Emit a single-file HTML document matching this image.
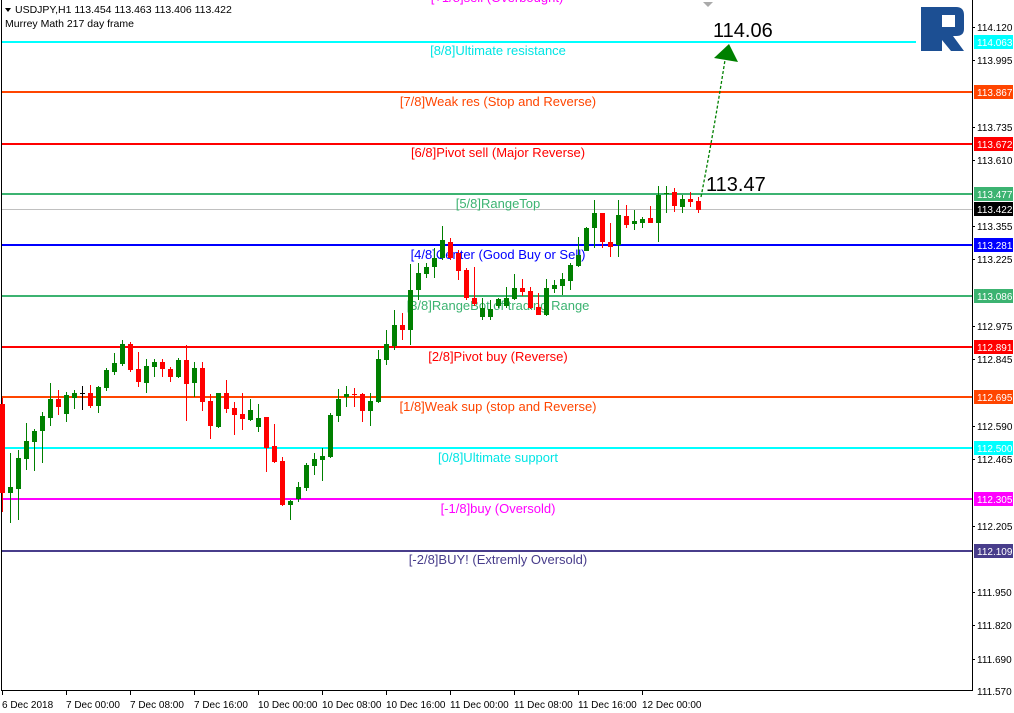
<!DOCTYPE html>
<html><head><meta charset="utf-8"><style>
html,body{margin:0;padding:0;background:#fff;}
svg{display:block;font-family:"Liberation Sans",sans-serif;}
</style></head><body>
<svg width="1014" height="713" viewBox="0 0 1014 713" xmlns="http://www.w3.org/2000/svg">
<rect width="1014" height="713" fill="#fff"/>
<line x1="1.5" y1="0" x2="1.5" y2="690" stroke="#000"/>
<line x1="972.5" y1="0" x2="972.5" y2="691" stroke="#000"/>
<line x1="1" y1="690.5" x2="973" y2="690.5" stroke="#000"/>

<text x="497" y="2" font-size="13" fill="#ff00ff" text-anchor="middle">[+1/8]sell (Overbought)</text>
<polygon points="703,2 713,2 708,7" fill="#aaa"/>

<polygon points="5,8 11,8 8,12" fill="#000"/>
<text x="15" y="13" font-size="10.5" fill="#000">USDJPY,H1  113.454 113.463 113.406 113.422</text>
<text x="5" y="27" font-size="10.5" fill="#000">Murrey Math 217 day frame</text>

<g stroke-width="2" shape-rendering="crispEdges">
<line x1="2" y1="42" x2="916" y2="42" stroke="#00ffff"/>
<line x1="2" y1="92" x2="972" y2="92" stroke="#ff4500"/>
<line x1="2" y1="144" x2="972" y2="144" stroke="#ff0000"/>
<line x1="2" y1="194" x2="972" y2="194" stroke="#3cb371"/>
<line x1="2" y1="245" x2="972" y2="245" stroke="#0000ff"/>
<line x1="2" y1="296" x2="972" y2="296" stroke="#3cb371"/>
<line x1="2" y1="347" x2="972" y2="347" stroke="#ff0000"/>
<line x1="2" y1="397" x2="972" y2="397" stroke="#ff4500"/>
<line x1="2" y1="448" x2="972" y2="448" stroke="#00ffff"/>
<line x1="2" y1="499" x2="972" y2="499" stroke="#ff00ff"/>
<line x1="2" y1="551" x2="972" y2="551" stroke="#483d8b"/>
</g>
<line x1="2" y1="209.5" x2="972" y2="209.5" stroke="#c0c0c0" shape-rendering="crispEdges"/>

<g font-size="13" text-anchor="middle">
<text x="498" y="55" fill="#00e5e5">[8/8]Ultimate resistance</text>
<text x="498" y="106" fill="#ff4500">[7/8]Weak res (Stop and Reverse)</text>
<text x="498" y="157" fill="#ff0000">[6/8]Pivot sell (Major Reverse)</text>
<text x="498" y="208" fill="#3cb371">[5/8]RangeTop</text>
<text x="498" y="259" fill="#0000ff">[4/8]Center (Good Buy or Sell)</text>
<text x="498" y="310" fill="#3cb371">[3/8]RangeBot of trading Range</text>
<text x="498" y="361" fill="#ff0000">[2/8]Pivot buy (Reverse)</text>
<text x="498" y="411" fill="#ff4500">[1/8]Weak sup (stop and Reverse)</text>
<text x="498" y="462" fill="#00e5e5">[0/8]Ultimate support</text>
<text x="498" y="513" fill="#ff00ff">[-1/8]buy (Oversold)</text>
<text x="498" y="564" fill="#483d8b">[-2/8]BUY! (Extremly Oversold)</text>
</g>

<g shape-rendering="crispEdges">
<g stroke="#ff0000" fill="#ff0000">
<line x1="2.5" y1="398" x2="2.5" y2="512"/><rect x="0" y="404" width="5" height="89" stroke="none"/>
<line x1="58.5" y1="390" x2="58.5" y2="415"/><rect x="56" y="399" width="5" height="8" stroke="none"/>
<line x1="90.5" y1="385" x2="90.5" y2="408"/><rect x="88" y="393" width="5" height="13" stroke="none"/>
<line x1="130.5" y1="342" x2="130.5" y2="372"/><rect x="128" y="344" width="5" height="26" stroke="none"/>
<line x1="138.5" y1="352" x2="138.5" y2="387"/><rect x="136" y="369" width="5" height="13" stroke="none"/>
<line x1="162.5" y1="359" x2="162.5" y2="377"/><rect x="160" y="362" width="5" height="7" stroke="none"/>
<line x1="170.5" y1="367" x2="170.5" y2="382"/><rect x="168" y="369" width="5" height="8" stroke="none"/>
<line x1="186.5" y1="345" x2="186.5" y2="421"/><rect x="184" y="360" width="5" height="24" stroke="none"/>
<line x1="202.5" y1="362" x2="202.5" y2="411"/><rect x="200" y="368" width="5" height="34" stroke="none"/>
<line x1="210.5" y1="394" x2="210.5" y2="439"/><rect x="208" y="401" width="5" height="25" stroke="none"/>
<line x1="226.5" y1="380" x2="226.5" y2="413"/><rect x="224" y="393" width="5" height="16" stroke="none"/>
<line x1="234.5" y1="402" x2="234.5" y2="435"/><rect x="232" y="408" width="5" height="7" stroke="none"/>
<line x1="242.5" y1="393" x2="242.5" y2="430"/><rect x="240" y="414" width="5" height="5" stroke="none"/>
<line x1="266.5" y1="417" x2="266.5" y2="472"/><rect x="264" y="417" width="5" height="31" stroke="none"/>
<line x1="274.5" y1="424" x2="274.5" y2="463"/><rect x="272" y="446" width="5" height="16" stroke="none"/>
<line x1="282.5" y1="457" x2="282.5" y2="506"/><rect x="280" y="461" width="5" height="44" stroke="none"/>
<line x1="354.5" y1="388" x2="354.5" y2="407"/><rect x="352" y="394" width="5" height="1" stroke="none"/>
<line x1="362.5" y1="393" x2="362.5" y2="422"/><rect x="360" y="394" width="5" height="17" stroke="none"/>
<line x1="402.5" y1="313" x2="402.5" y2="340"/><rect x="400" y="325" width="5" height="5" stroke="none"/>
<line x1="450.5" y1="238" x2="450.5" y2="260"/><rect x="448" y="242" width="5" height="16" stroke="none"/>
<line x1="458.5" y1="250" x2="458.5" y2="280"/><rect x="456" y="253" width="5" height="18" stroke="none"/>
<line x1="466.5" y1="268" x2="466.5" y2="300"/><rect x="464" y="270" width="5" height="28" stroke="none"/>
<line x1="474.5" y1="267" x2="474.5" y2="306"/><rect x="472" y="298" width="5" height="6" stroke="none"/>
<line x1="522.5" y1="279" x2="522.5" y2="296"/><rect x="520" y="288" width="5" height="4" stroke="none"/>
<line x1="530.5" y1="287" x2="530.5" y2="309"/><rect x="528" y="291" width="5" height="17" stroke="none"/>
<line x1="538.5" y1="293" x2="538.5" y2="315"/><rect x="536" y="307" width="5" height="8" stroke="none"/>
<line x1="602.5" y1="213" x2="602.5" y2="248"/><rect x="600" y="213" width="5" height="29" stroke="none"/>
<line x1="610.5" y1="223" x2="610.5" y2="257"/><rect x="608" y="242" width="5" height="5" stroke="none"/>
<line x1="626.5" y1="205" x2="626.5" y2="228"/><rect x="624" y="216" width="5" height="9" stroke="none"/>
<line x1="650.5" y1="206" x2="650.5" y2="223"/><rect x="648" y="218" width="5" height="5" stroke="none"/>
<line x1="674.5" y1="188" x2="674.5" y2="212"/><rect x="672" y="192" width="5" height="14" stroke="none"/>
<line x1="690.5" y1="192" x2="690.5" y2="207"/><rect x="688" y="199" width="5" height="3" stroke="none"/>
<line x1="698.5" y1="197" x2="698.5" y2="213"/><rect x="696" y="201" width="5" height="9" stroke="none"/>
</g>
<g stroke="#008000" fill="#008000">
<line x1="10.5" y1="453" x2="10.5" y2="523"/><rect x="8" y="487" width="5" height="6" stroke="none"/>
<line x1="18.5" y1="450" x2="18.5" y2="520"/><rect x="16" y="458" width="5" height="31" stroke="none"/>
<line x1="26.5" y1="423" x2="26.5" y2="470"/><rect x="24" y="441" width="5" height="18" stroke="none"/>
<line x1="34.5" y1="429" x2="34.5" y2="471"/><rect x="32" y="431" width="5" height="11" stroke="none"/>
<line x1="42.5" y1="412" x2="42.5" y2="463"/><rect x="40" y="416" width="5" height="15" stroke="none"/>
<line x1="50.5" y1="383" x2="50.5" y2="426"/><rect x="48" y="399" width="5" height="19" stroke="none"/>
<line x1="66.5" y1="392" x2="66.5" y2="422"/><rect x="64" y="395" width="5" height="19" stroke="none"/>
<line x1="74.5" y1="390" x2="74.5" y2="409"/><rect x="72" y="393" width="5" height="5" stroke="none"/>
<line x1="98.5" y1="386" x2="98.5" y2="413"/><rect x="96" y="387" width="5" height="19" stroke="none"/>
<line x1="106.5" y1="368" x2="106.5" y2="391"/><rect x="104" y="370" width="5" height="18" stroke="none"/>
<line x1="114.5" y1="353" x2="114.5" y2="375"/><rect x="112" y="363" width="5" height="9" stroke="none"/>
<line x1="122.5" y1="340" x2="122.5" y2="366"/><rect x="120" y="344" width="5" height="20" stroke="none"/>
<line x1="146.5" y1="359" x2="146.5" y2="393"/><rect x="144" y="366" width="5" height="17" stroke="none"/>
<line x1="154.5" y1="359" x2="154.5" y2="377"/><rect x="152" y="362" width="5" height="5" stroke="none"/>
<line x1="178.5" y1="358" x2="178.5" y2="378"/><rect x="176" y="360" width="5" height="17" stroke="none"/>
<line x1="194.5" y1="362" x2="194.5" y2="397"/><rect x="192" y="368" width="5" height="15" stroke="none"/>
<line x1="218.5" y1="393" x2="218.5" y2="428"/><rect x="216" y="393" width="5" height="34" stroke="none"/>
<line x1="250.5" y1="399" x2="250.5" y2="421"/><rect x="248" y="410" width="5" height="10" stroke="none"/>
<line x1="258.5" y1="404" x2="258.5" y2="432"/><rect x="256" y="418" width="5" height="9" stroke="none"/>
<line x1="290.5" y1="500" x2="290.5" y2="520"/><rect x="288" y="501" width="5" height="4" stroke="none"/>
<line x1="298.5" y1="482" x2="298.5" y2="502"/><rect x="296" y="487" width="5" height="12" stroke="none"/>
<line x1="306.5" y1="463" x2="306.5" y2="491"/><rect x="304" y="465" width="5" height="23" stroke="none"/>
<line x1="314.5" y1="453" x2="314.5" y2="475"/><rect x="312" y="459" width="5" height="7" stroke="none"/>
<line x1="322.5" y1="448" x2="322.5" y2="481"/><rect x="320" y="456" width="5" height="4" stroke="none"/>
<line x1="330.5" y1="413" x2="330.5" y2="458"/><rect x="328" y="415" width="5" height="42" stroke="none"/>
<line x1="338.5" y1="389" x2="338.5" y2="422"/><rect x="336" y="399" width="5" height="17" stroke="none"/>
<line x1="346.5" y1="386" x2="346.5" y2="407"/><rect x="344" y="394" width="5" height="3" stroke="none"/>
<line x1="370.5" y1="393" x2="370.5" y2="426"/><rect x="368" y="401" width="5" height="10" stroke="none"/>
<line x1="378.5" y1="350" x2="378.5" y2="403"/><rect x="376" y="359" width="5" height="43" stroke="none"/>
<line x1="386.5" y1="330" x2="386.5" y2="365"/><rect x="384" y="344" width="5" height="16" stroke="none"/>
<line x1="394.5" y1="310" x2="394.5" y2="350"/><rect x="392" y="325" width="5" height="21" stroke="none"/>
<line x1="410.5" y1="264" x2="410.5" y2="345"/><rect x="408" y="290" width="5" height="40" stroke="none"/>
<line x1="418.5" y1="263" x2="418.5" y2="300"/><rect x="416" y="273" width="5" height="17" stroke="none"/>
<line x1="426.5" y1="263" x2="426.5" y2="278"/><rect x="424" y="267" width="5" height="7" stroke="none"/>
<line x1="434.5" y1="248" x2="434.5" y2="278"/><rect x="432" y="258" width="5" height="9" stroke="none"/>
<line x1="442.5" y1="226" x2="442.5" y2="260"/><rect x="440" y="240" width="5" height="18" stroke="none"/>
<line x1="482.5" y1="298" x2="482.5" y2="320"/><rect x="480" y="308" width="5" height="9" stroke="none"/>
<line x1="490.5" y1="300" x2="490.5" y2="320"/><rect x="488" y="309" width="5" height="8" stroke="none"/>
<line x1="498.5" y1="298" x2="498.5" y2="308"/><rect x="496" y="299" width="5" height="7" stroke="none"/>
<line x1="506.5" y1="287" x2="506.5" y2="308"/><rect x="504" y="298" width="5" height="8" stroke="none"/>
<line x1="514.5" y1="274" x2="514.5" y2="300"/><rect x="512" y="288" width="5" height="11" stroke="none"/>
<line x1="546.5" y1="279" x2="546.5" y2="316"/><rect x="544" y="288" width="5" height="27" stroke="none"/>
<line x1="554.5" y1="280" x2="554.5" y2="293"/><rect x="552" y="285" width="5" height="4" stroke="none"/>
<line x1="562.5" y1="273" x2="562.5" y2="295"/><rect x="560" y="279" width="5" height="7" stroke="none"/>
<line x1="570.5" y1="263" x2="570.5" y2="290"/><rect x="568" y="265" width="5" height="16" stroke="none"/>
<line x1="578.5" y1="237" x2="578.5" y2="267"/><rect x="576" y="255" width="5" height="11" stroke="none"/>
<line x1="586.5" y1="227" x2="586.5" y2="251"/><rect x="584" y="228" width="5" height="23" stroke="none"/>
<line x1="594.5" y1="200" x2="594.5" y2="248"/><rect x="592" y="213" width="5" height="15" stroke="none"/>
<line x1="618.5" y1="200" x2="618.5" y2="257"/><rect x="616" y="215" width="5" height="30" stroke="none"/>
<line x1="634.5" y1="210" x2="634.5" y2="230"/><rect x="632" y="221" width="5" height="3" stroke="none"/>
<line x1="642.5" y1="217" x2="642.5" y2="228"/><rect x="640" y="219" width="5" height="4" stroke="none"/>
<line x1="658.5" y1="186" x2="658.5" y2="242"/><rect x="656" y="195" width="5" height="28" stroke="none"/>
<line x1="666.5" y1="186" x2="666.5" y2="213"/><rect x="664" y="193" width="5" height="1" stroke="none"/>
<line x1="682.5" y1="195" x2="682.5" y2="213"/><rect x="680" y="199" width="5" height="8" stroke="none"/>
</g>
<line x1="82.5" y1="386" x2="82.5" y2="410" stroke="#000"/><line x1="80" y1="393.5" x2="85" y2="393.5" stroke="#000"/>
</g>

<path d="M701,197 Q714,130 725,60" fill="none" stroke="#008000" stroke-width="1.3" stroke-dasharray="3,2"/>
<polygon points="714,58 738,62 729,44" fill="#008000"/>
<text x="706" y="191" font-size="20" fill="#000">113.47</text>
<text x="713" y="37" font-size="20" fill="#000">114.06</text>

<path d="M921,7 H956 Q964,7 964,15 V29 Q964,36 956,36 H953 L964,51 H951 L942,40 V51 H921 Z M942,15 V27 H955 V15 Z" fill="#1c4f93" fill-rule="evenodd"/>

<g font-size="10" fill="#000">
<text x="977" y="31">114.120</text>
<text x="977" y="64">113.995</text>
<text x="977" y="131">113.735</text>
<text x="977" y="164">113.610</text>
<text x="977" y="230">113.355</text>
<text x="977" y="263">113.225</text>
<text x="977" y="330">112.975</text>
<text x="977" y="363">112.845</text>
<text x="977" y="430">112.590</text>
<text x="977" y="463">112.465</text>
<text x="977" y="530">112.205</text>
<text x="977" y="596">111.950</text>
<text x="977" y="629">111.820</text>
<text x="977" y="663">111.690</text>
<text x="977" y="695">111.570</text>
</g>
<g stroke="#000">
<line x1="972" y1="27.5" x2="975" y2="27.5"/><line x1="972" y1="60.5" x2="975" y2="60.5"/>
<line x1="972" y1="127.5" x2="975" y2="127.5"/><line x1="972" y1="160.5" x2="975" y2="160.5"/>
<line x1="972" y1="226.5" x2="975" y2="226.5"/><line x1="972" y1="259.5" x2="975" y2="259.5"/>
<line x1="972" y1="326.5" x2="975" y2="326.5"/><line x1="972" y1="359.5" x2="975" y2="359.5"/>
<line x1="972" y1="426.5" x2="975" y2="426.5"/><line x1="972" y1="459.5" x2="975" y2="459.5"/>
<line x1="972" y1="526.5" x2="975" y2="526.5"/><line x1="972" y1="592.5" x2="975" y2="592.5"/>
<line x1="972" y1="625.5" x2="975" y2="625.5"/><line x1="972" y1="659.5" x2="975" y2="659.5"/>
</g>
<g font-size="10" fill="#fff">
<rect x="974" y="35" width="39" height="14" fill="#00ffff"/><text x="977" y="46">114.063</text>
<rect x="974" y="85" width="39" height="14" fill="#ff4500"/><text x="977" y="96">113.867</text>
<rect x="974" y="137" width="39" height="14" fill="#ff0000"/><text x="977" y="148">113.672</text>
<rect x="974" y="187" width="39" height="14" fill="#3cb371"/><text x="977" y="198">113.477</text>
<rect x="974" y="202" width="39" height="14" fill="#000"/><text x="977" y="213">113.422</text>
<rect x="974" y="238" width="39" height="14" fill="#0000ff"/><text x="977" y="249">113.281</text>
<rect x="974" y="289" width="39" height="14" fill="#3cb371"/><text x="977" y="300">113.086</text>
<rect x="974" y="340" width="39" height="14" fill="#ff0000"/><text x="977" y="351">112.891</text>
<rect x="974" y="390" width="39" height="14" fill="#ff4500"/><text x="977" y="401">112.695</text>
<rect x="974" y="441" width="39" height="14" fill="#00ffff"/><text x="977" y="452">112.500</text>
<rect x="974" y="492" width="39" height="14" fill="#ff00ff"/><text x="977" y="503">112.305</text>
<rect x="974" y="544" width="39" height="14" fill="#483d8b"/><text x="977" y="555">112.109</text>
</g>

<g font-size="10" fill="#000">
<text x="2" y="708">6 Dec 2018</text>
<text x="66" y="708">7 Dec 00:00</text>
<text x="130" y="708">7 Dec 08:00</text>
<text x="194" y="708">7 Dec 16:00</text>
<text x="258" y="708">10 Dec 00:00</text>
<text x="322" y="708">10 Dec 08:00</text>
<text x="386" y="708">10 Dec 16:00</text>
<text x="450" y="708">11 Dec 00:00</text>
<text x="514" y="708">11 Dec 08:00</text>
<text x="578" y="708">11 Dec 16:00</text>
<text x="642" y="708">12 Dec 00:00</text>
</g>
<g stroke="#000">
<line x1="2.5" y1="690" x2="2.5" y2="695"/><line x1="66.5" y1="690" x2="66.5" y2="695"/>
<line x1="130.5" y1="690" x2="130.5" y2="695"/><line x1="194.5" y1="690" x2="194.5" y2="695"/>
<line x1="258.5" y1="690" x2="258.5" y2="695"/><line x1="322.5" y1="690" x2="322.5" y2="695"/>
<line x1="386.5" y1="690" x2="386.5" y2="695"/><line x1="450.5" y1="690" x2="450.5" y2="695"/>
<line x1="514.5" y1="690" x2="514.5" y2="695"/><line x1="578.5" y1="690" x2="578.5" y2="695"/>
<line x1="642.5" y1="690" x2="642.5" y2="695"/>
</g>
</svg>
</body></html>
